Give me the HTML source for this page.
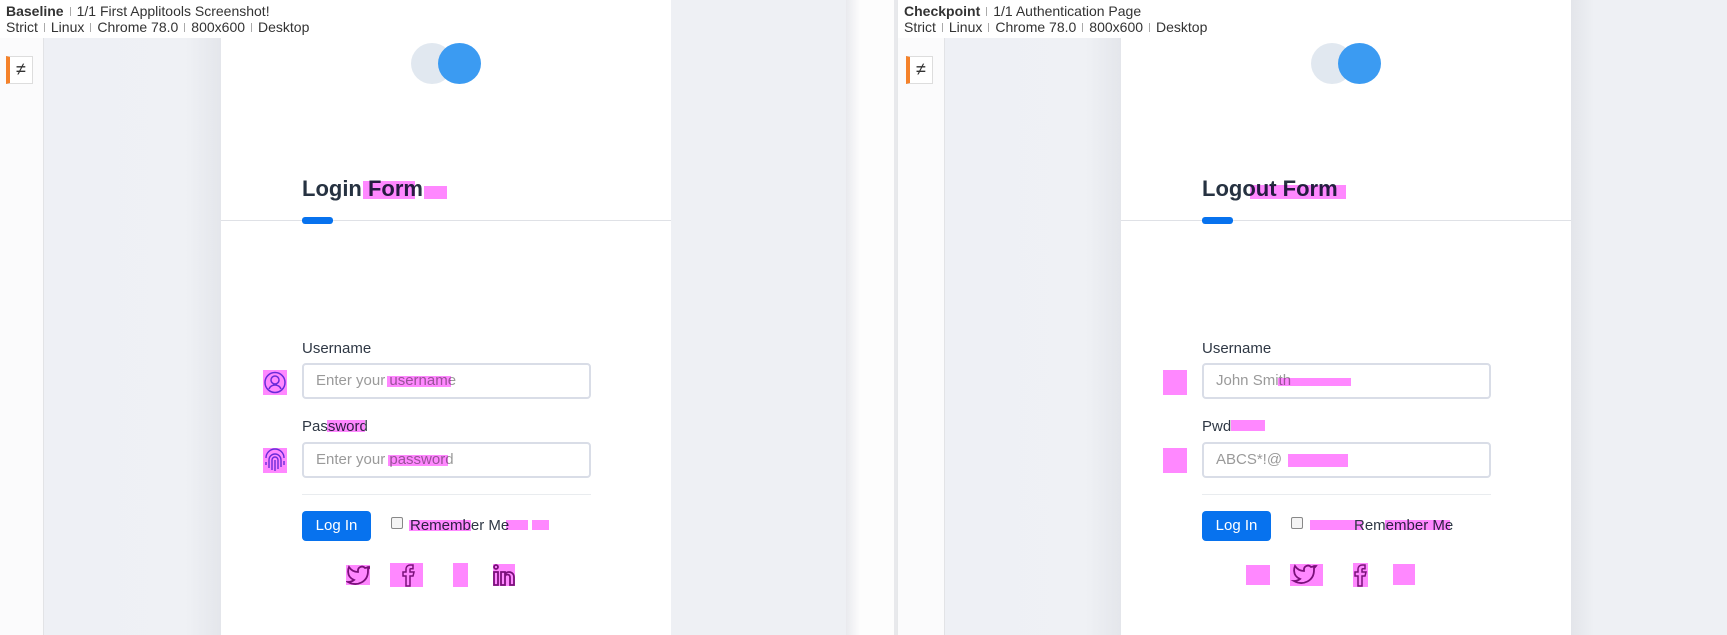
<!DOCTYPE html>
<html><head><meta charset="utf-8"><style>
*{margin:0;padding:0;box-sizing:border-box}
body{width:1727px;height:635px;overflow:hidden;background:#eef0f4;font-family:"Liberation Sans",sans-serif;position:relative}
.a{position:absolute}
.strip{background:#fbfbfc;border-right:1px solid #e2e3e6;box-shadow:2px 0 4px rgba(0,0,0,.06)}
.gray{background:linear-gradient(90deg,#eef0f5,#eff1f5 80%,#e4e6eb)}
.panel{background:#fff}
.hdr{background:#fff;font-size:14px;color:#333;line-height:16px;padding:3px 6px;white-space:nowrap}
.hdr b{font-weight:bold}
.sep{display:inline-block;width:1px;height:9px;background:#aaa;margin:0 6px}
.tab{border:1px solid #ddd;background:#fff;width:27px;height:28px;border-left:4px solid #f5822a;font-size:18px;text-align:center;line-height:25px;color:#333}
.title{font-size:22px;font-weight:bold;color:#263241}
.lbl{font-size:15px;color:#2f3845}
.inp{border:2px solid #d9dde7;border-radius:4px;width:289px;height:36px;font-size:15px;color:#9a9a9a;padding:8px 12px;line-height:16px}
.btn{background:#0772ee;color:#fff;border-radius:4px;width:69px;height:30px;font-size:15px;text-align:center;line-height:29px}
.chk{width:12px;height:12px;border:1px solid #888;border-radius:2px;background:#f4f4f4}
.mg,.ic{background:#ff88ff;mix-blend-mode:multiply}
</style></head><body>
<div class="a strip" style="left:0;top:0;width:44px;height:635px"></div>
<div class="a gray" style="left:44px;top:0;width:177px;height:635px"></div>
<div class="a panel" style="left:221px;top:0;width:450px;height:635px"></div>
<div class="a" style="left:671px;top:0;width:175px;height:635px;background:#eef0f4"></div>
<div class="a" style="left:846px;top:0;width:48px;height:635px;background:linear-gradient(90deg,#e9eaee,#fdfdfd 30%)"></div>
<div class="a" style="left:894px;top:0;width:4px;height:635px;background:#e8e9ec"></div>
<div class="a strip" style="left:898px;top:0;width:47px;height:635px"></div>
<div class="a gray" style="left:945px;top:0;width:176px;height:635px"></div>
<div class="a panel" style="left:1121px;top:0;width:450px;height:635px"></div>
<div class="a" style="left:1571px;top:0;width:156px;height:635px;background:linear-gradient(90deg,#e3e5ea,#eef0f4 15%)"></div>

<div class="a hdr" style="left:0;top:0;height:38px"><b>Baseline</b><span class="sep"></span>1/1 First Applitools Screenshot!<br>Strict<span class="sep"></span>Linux<span class="sep"></span>Chrome 78.0<span class="sep"></span>800x600<span class="sep"></span>Desktop</div>
<div class="a hdr" style="left:898px;top:0;height:38px"><b>Checkpoint</b><span class="sep"></span>1/1 Authentication Page<br>Strict<span class="sep"></span>Linux<span class="sep"></span>Chrome 78.0<span class="sep"></span>800x600<span class="sep"></span>Desktop</div>
<div class="a tab" style="left:6px;top:56px">≠</div>
<div class="a tab" style="left:906px;top:56px">≠</div>

<!-- LEFT FORM -->
<div class="a" style="left:411px;top:43px;width:42px;height:41px;border-radius:50%;background:#e1e8f0"></div>
<div class="a" style="left:438px;top:43px;width:43px;height:41px;border-radius:50%;background:#3b9bf2"></div>
<div class="a title" style="left:302px;top:176px">Login Form</div>
<div class="a mg" style="left:363px;top:181px;width:52px;height:18px"></div>
<div class="a mg" style="left:424px;top:186px;width:23px;height:13px"></div>
<div class="a" style="left:221px;top:220px;width:450px;height:1px;background:#dfe1e6"></div>
<div class="a" style="left:302px;top:217px;width:31px;height:7px;background:#0772ee;border-radius:3px"></div>
<div class="a lbl" style="left:302px;top:340px">Username</div>
<div class="a inp" style="left:302px;top:363px">Enter your username</div>
<div class="a mg" style="left:387px;top:376px;width:64px;height:11px"></div>
<div class="a ic" style="left:263px;top:370px;width:24px;height:25px"><svg width="24" height="25" viewBox="0 0 24 25"><circle cx="12" cy="12.5" r="10" fill="none" stroke="#6a2bd9" stroke-width="1.5"/><circle cx="12" cy="10" r="4" fill="none" stroke="#6a2bd9" stroke-width="1.5"/><path d="M6 19c1-3 4-4 6-4s5 1 6 4" fill="none" stroke="#6a2bd9" stroke-width="1.5"/></svg></div>
<div class="a lbl" style="left:302px;top:418px">Password</div>
<div class="a mg" style="left:327px;top:420px;width:38px;height:12px"></div>
<div class="a inp" style="left:302px;top:442px">Enter your password</div>
<div class="a mg" style="left:388px;top:455px;width:60px;height:11px"></div>
<div class="a ic" style="left:263px;top:448px;width:24px;height:25px"><svg width="24" height="25" viewBox="0 0 24 25" fill="none" stroke="#6a2bd9" stroke-width="1.4"><path d="M3 10a9 9 0 0 1 18 0"/><path d="M6 20v-8a6 6 0 0 1 12 0v7"/><path d="M9 22v-10a3 3 0 0 1 6 0v9"/><path d="M12 12v11"/><path d="M3 14v3M21 13v4"/></svg></div>
<div class="a" style="left:302px;top:494px;width:289px;height:1px;background:#e9ecef"></div>
<div class="a btn" style="left:302px;top:511px">Log In</div>
<div class="a chk" style="left:391px;top:517px"></div>
<div class="a lbl" style="left:410px;top:517px">Remember Me</div>
<div class="a mg" style="left:409px;top:520px;width:62px;height:11px"></div>
<div class="a mg" style="left:506px;top:520px;width:22px;height:10px"></div>
<div class="a mg" style="left:532px;top:520px;width:17px;height:10px"></div>
<div class="a ic" style="left:346px;top:565px;width:24px;height:20px"><svg width="24" height="20" viewBox="0 0 24 20"><path d="M22 2c-1 .6-2 1-3 1a4 4 0 0 0-7 3v1C8 7 5 5 3 2c0 0-4 9 5 13-2 1.5-4 2-6 2 9 5 20 0 20-11V4c1-.6 1.5-1.3 2-2z" fill="none" stroke="#7a107a" stroke-width="1.8"/></svg></div>
<div class="a ic" style="left:390px;top:563px;width:33px;height:24px"><svg width="33" height="24" viewBox="0 0 33 24"><path d="M23 2h-3a4 4 0 0 0-4 4v3h-3v4h3v10h4V13h3l1-4h-4V6.5c0-.5.4-.8.8-.8H23z" fill="none" stroke="#7a107a" stroke-width="1.5"/></svg></div>
<div class="a ic" style="left:453px;top:563px;width:15px;height:24px"></div>
<div class="a ic" style="left:493px;top:564px;width:22px;height:22px"><svg width="22" height="22" viewBox="0 0 22 22" fill="none" stroke="#7a107a" stroke-width="1.8"><circle cx="3" cy="3" r="2"/><path d="M1 8h4v13H1zM8 8h4v2a5 5 0 0 1 9 3v8h-4v-8a2 2 0 0 0-5 0v8H8z"/></svg></div>

<!-- RIGHT FORM -->
<div class="a" style="left:1311px;top:43px;width:42px;height:41px;border-radius:50%;background:#e1e8f0"></div>
<div class="a" style="left:1338px;top:43px;width:43px;height:41px;border-radius:50%;background:#3b9bf2"></div>
<div class="a title" style="left:1202px;top:176px">Logout Form</div>
<div class="a mg" style="left:1250px;top:185px;width:96px;height:14px"></div>
<div class="a" style="left:1121px;top:220px;width:450px;height:1px;background:#dfe1e6"></div>
<div class="a" style="left:1202px;top:217px;width:31px;height:7px;background:#0772ee;border-radius:3px"></div>
<div class="a lbl" style="left:1202px;top:340px">Username</div>
<div class="a inp" style="left:1202px;top:363px">John Smith</div>
<div class="a mg" style="left:1278px;top:378px;width:73px;height:8px"></div>
<div class="a ic" style="left:1163px;top:370px;width:24px;height:25px"></div>
<div class="a lbl" style="left:1202px;top:418px">Pwd</div>
<div class="a mg" style="left:1231px;top:420px;width:34px;height:11px"></div>
<div class="a inp" style="left:1202px;top:442px">ABCS*!@</div>
<div class="a mg" style="left:1288px;top:454px;width:60px;height:13px"></div>
<div class="a ic" style="left:1163px;top:448px;width:24px;height:25px"></div>
<div class="a" style="left:1202px;top:494px;width:289px;height:1px;background:#e9ecef"></div>
<div class="a btn" style="left:1202px;top:511px">Log In</div>
<div class="a chk" style="left:1291px;top:517px"></div>
<div class="a mg" style="left:1310px;top:520px;width:53px;height:10px"></div>
<div class="a lbl" style="left:1354px;top:517px">Remember Me</div>
<div class="a mg" style="left:1385px;top:520px;width:65px;height:10px"></div>
<div class="a ic" style="left:1246px;top:565px;width:24px;height:20px"></div>
<div class="a ic" style="left:1290px;top:564px;width:33px;height:22px"><svg width="33" height="22" viewBox="0 0 33 22"><path d="M24 2c-1 .6-2 1-3 1a4 4 0 0 0-7 3v1C10 7 7 5 5 2c0 0-4 9 5 13-2 1.5-4 2-6 2 9 5 20 0 20-11V4c1-.6 1.5-1.3 2-2z" fill="none" stroke="#7a107a" stroke-width="1.8"/></svg></div>
<div class="a ic" style="left:1353px;top:563px;width:15px;height:24px"><svg width="15" height="24" viewBox="0 0 15 24"><path d="M12 2H9a4 4 0 0 0-4 4v3H2v4h3v10h4V13h3l1-4H9V6.5c0-.5.4-.8.8-.8H12z" fill="none" stroke="#7a107a" stroke-width="1.5"/></svg></div>
<div class="a ic" style="left:1393px;top:564px;width:22px;height:21px"></div>
</body></html>
